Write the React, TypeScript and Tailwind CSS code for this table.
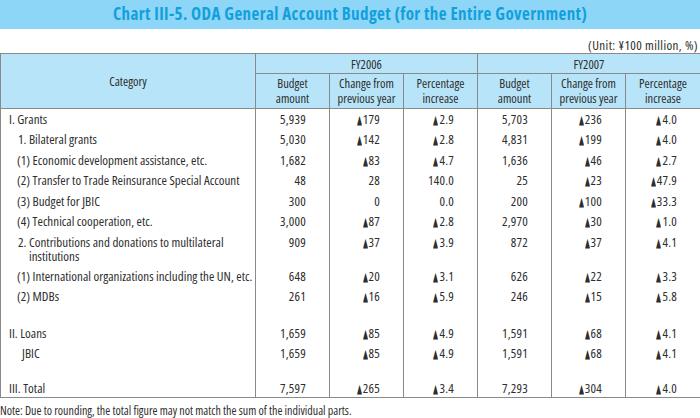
import { Fragment } from 'react';

const rows: { label: string; indent: string; v: string[]; two?: string }[] = [
  { label: 'I. Grants', indent: 'pl-[8px]', v: ['5,939', '▲179', '▲2.9', '5,703', '▲236', '▲4.0'] },
  { label: '1. Bilateral grants', indent: 'pl-[17px]', v: ['5,030', '▲142', '▲2.8', '4,831', '▲199', '▲4.0'] },
  { label: '(1) Economic development assistance, etc.', indent: 'pl-[16px]', v: ['1,682', '▲83', '▲4.7', '1,636', '▲46', '▲2.7'] },
  { label: '(2) Transfer to Trade Reinsurance Special Account', indent: 'pl-[16px]', v: ['48', '28', '140.0', '25', '▲23', '▲47.9'] },
  { label: '(3) Budget for JBIC', indent: 'pl-[16px]', v: ['300', '0', '0.0', '200', '▲100', '▲33.3'] },
  { label: '(4) Technical cooperation, etc.', indent: 'pl-[16px]', v: ['3,000', '▲87', '▲2.8', '2,970', '▲30', '▲1.0'] },
  {
    label: '2. Contributions and donations to multilateral',
    two: 'institutions',
    indent: 'pl-[17px]',
    v: ['909', '▲37', '▲3.9', '872', '▲37', '▲4.1'],
  },
  { label: '(1) International organizations including the UN, etc.', indent: 'pl-[16px]', v: ['648', '▲20', '▲3.1', '626', '▲22', '▲3.3'] },
  { label: '(2) MDBs', indent: 'pl-[16px]', v: ['261', '▲16', '▲5.9', '246', '▲15', '▲5.8'] },
  { label: '', indent: '', v: [] },
  { label: 'II. Loans', indent: 'pl-[8px]', v: ['1,659', '▲85', '▲4.9', '1,591', '▲68', '▲4.1'] },
  { label: 'JBIC', indent: 'pl-[21px]', v: ['1,659', '▲85', '▲4.9', '1,591', '▲68', '▲4.1'] },
  { label: '', indent: '', v: [] },
  { label: 'III. Total', indent: 'pl-[8px]', v: ['7,597', '▲265', '▲3.4', '7,293', '▲304', '▲4.0'] },
];

// minus sign in the source is a small filled triangle
function Num({ value }: { value: string }) {
  if (value.startsWith('▲')) {
    return (
      <>
        <span className="inline-block w-[6px] text-[13px] scale-x-[0.5] origin-left font-['DejaVu_Sans',sans-serif] [font-stretch:normal] tracking-normal">
          ▲
        </span>
        {value.slice(1)}
      </>
    );
  }
  return <>{value}</>;
}

export default function App() {
  const line = 'border-[#8a8a8a]';
  const head = ['Budget|amount', 'Change from|previous year', 'Percentage|increase'];
  return (
    <div className="w-[700px] h-[418px] bg-white text-[#2e2e2e] font-['Open_Sans',sans-serif] [font-stretch:condensed] text-[13px] overflow-hidden">
      {/* Title */}
      <div className="h-[29px] pb-[2px] bg-[#8dd6f7] flex items-center justify-center">
        <h1 className="text-[#12a0dc] font-bold text-[17px] tracking-[0.4px]">
          Chart III-5. ODA General Account Budget (for the Entire Government)
        </h1>
      </div>

      <div className="h-[24px] pt-[9px] leading-[14px] text-right pr-[2px] tracking-[0.4px]">(Unit: ¥100 million, %)</div>

      <table className={`w-[700px] border-collapse table-fixed border ${line}`}>
        <colgroup>
          <col className="w-[255px]" />
          <col className="w-[74px]" />
          <col className="w-[74px]" />
          <col className="w-[74px]" />
          <col className="w-[74px]" />
          <col className="w-[74px]" />
          <col className="w-[75px]" />
        </colgroup>
        <thead className="bg-[#b7e4f8] leading-[15px] text-[12.5px]">
          <tr className="h-[20px]">
            <th rowSpan={2} className={`font-normal border ${line}`}>Category</th>
            <th colSpan={3} className={`font-normal border ${line} pt-[2px]`}>FY2006</th>
            <th colSpan={3} className={`font-normal border ${line} pt-[2px]`}>FY2007</th>
          </tr>
          <tr className="h-[35px]">
            {[0, 1].map((y) => (
              <Fragment key={y}>
                {head.map((h) => (
                  <th key={h} className={`font-normal border ${line} p-0`}>
                    {h.split('|')[0]}
                    <br />
                    {h.split('|')[1]}
                  </th>
                ))}
              </Fragment>
            ))}
          </tr>
        </thead>
        <tbody className="leading-[14px]">
          {rows.map((r, i) => {
            const spacer = r.v.length === 0;
            const h = spacer ? (i === 9 ? 'h-[16px]' : 'h-[14.5px]') : r.two ? 'h-[34px]' : i === 13 ? 'h-[19.5px]' : 'h-[20.5px]';
            return (
              <tr key={i} className={h}>
                <td className={`border-x ${line} ${r.indent} p-0 pt-[3px] align-top whitespace-nowrap tracking-[0.03px]`}>
                  {r.label}
                  {r.two && <div className="pl-[11px]">{r.two}</div>}
                </td>
                {Array.from({ length: 6 }).map((_, j) => (
                  <td key={j} className={`border-x ${line} text-right pr-[23px] pl-0 pt-[3px] align-top tracking-[0.2px]`}>
                    {r.v[j] && <Num value={r.v[j]} />}
                  </td>
                ))}
              </tr>
            );
          })}
        </tbody>
      </table>

      <div className="mt-[5px] text-[12px] leading-[16px]">
        Note: Due to rounding, the total figure may not match the sum of the individual parts.
      </div>
    </div>
  );
}
